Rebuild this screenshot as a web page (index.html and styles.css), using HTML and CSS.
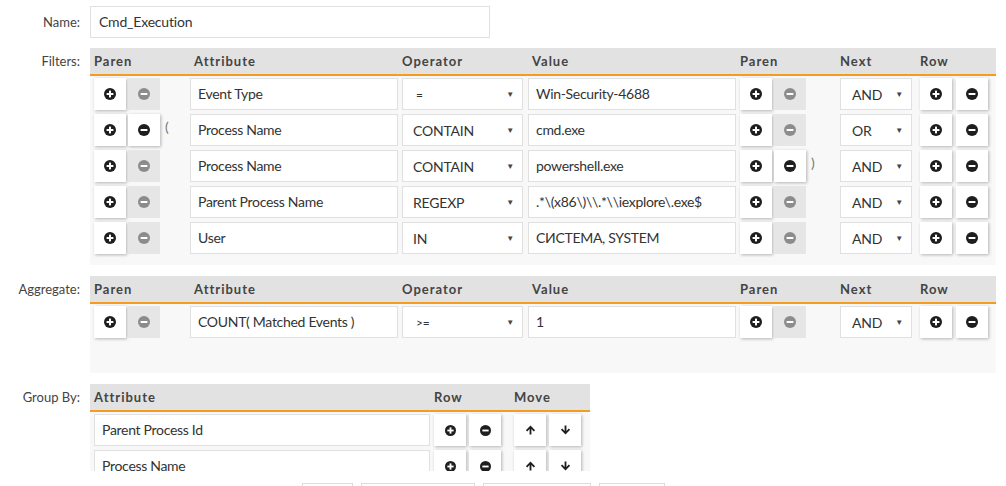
FILE: index.html
```html
<!DOCTYPE html>
<html>
<head>
<meta charset="utf-8">
<link rel="stylesheet" href="styles.css">
</head>
<body>
<svg width="0" height="0" style="position:absolute">
  <defs>
    <symbol id="plus" viewBox="0 0 12 12"><circle cx="6" cy="6" r="6"/><rect x="5" y="2.6" width="2" height="6.8" fill="#fff"/><rect x="2.6" y="5" width="6.8" height="2" fill="#fff"/></symbol>
    <symbol id="minus" viewBox="0 0 12 12"><circle cx="6" cy="6" r="6"/><rect x="2.6" y="5" width="6.8" height="2" fill="#fff"/></symbol>
    <symbol id="up" viewBox="0 0 12 12"><path d="M6 1 L11 6.2 L9.6 7.6 L7 5 L7 11 L5 11 L5 5 L2.4 7.6 L1 6.2 Z"/></symbol>
    <symbol id="down" viewBox="0 0 12 12"><path d="M6 11 L11 5.8 L9.6 4.4 L7 7 L7 1 L5 1 L5 7 L2.4 4.4 L1 5.8 Z"/></symbol>
  </defs>
</svg>
<div class="form">
  <div class="field">
    <div class="lbl lbl-name">Name:</div>
    <div class="name-input">Cmd_Execution</div>
  </div>

  <div class="field section">
    <div class="lbl">Filters:</div>
    <div class="table wide">
      <div class="thead">
        <div class="h c-paren">Paren</div>
        <div class="h c-attr">Attribute</div>
        <div class="h c-op">Operator</div>
        <div class="h c-val">Value</div>
        <div class="h c-paren2">Paren</div>
        <div class="h c-next">Next</div>
        <div class="h c-row">Row</div>
      </div>
      <div class="tbody filters-body">
        <div class="row">
          <div class="btn"><svg class="ic"><use href="#plus"/></svg></div>
          <div class="btn off"><svg class="ic"><use href="#minus"/></svg></div>
          <div class="par"></div>
          <div class="inp attr">Event Type</div>
          <div class="sel op"><span class="eq">=</span><span class="arr">▼</span></div>
          <div class="inp val">Win-Security-4688</div>
          <div class="btn"><svg class="ic"><use href="#plus"/></svg></div>
          <div class="btn off"><svg class="ic"><use href="#minus"/></svg></div>
          <div class="par2"></div>
          <div class="sel next"><span>AND</span><span class="arr">▼</span></div>
          <div class="btn rb1"><svg class="ic"><use href="#plus"/></svg></div>
          <div class="btn rb2"><svg class="ic"><use href="#minus"/></svg></div>
        </div>
        <div class="row">
          <div class="btn"><svg class="ic"><use href="#plus"/></svg></div>
          <div class="btn"><svg class="ic"><use href="#minus"/></svg></div>
          <div class="par">(</div>
          <div class="inp attr">Process Name</div>
          <div class="sel op"><span>CONTAIN</span><span class="arr">▼</span></div>
          <div class="inp val">cmd.exe</div>
          <div class="btn"><svg class="ic"><use href="#plus"/></svg></div>
          <div class="btn off"><svg class="ic"><use href="#minus"/></svg></div>
          <div class="par2"></div>
          <div class="sel next"><span>OR</span><span class="arr">▼</span></div>
          <div class="btn rb1"><svg class="ic"><use href="#plus"/></svg></div>
          <div class="btn rb2"><svg class="ic"><use href="#minus"/></svg></div>
        </div>
        <div class="row">
          <div class="btn"><svg class="ic"><use href="#plus"/></svg></div>
          <div class="btn off"><svg class="ic"><use href="#minus"/></svg></div>
          <div class="par"></div>
          <div class="inp attr">Process Name</div>
          <div class="sel op"><span>CONTAIN</span><span class="arr">▼</span></div>
          <div class="inp val">powershell.exe</div>
          <div class="btn"><svg class="ic"><use href="#plus"/></svg></div>
          <div class="btn"><svg class="ic"><use href="#minus"/></svg></div>
          <div class="par2">)</div>
          <div class="sel next"><span>AND</span><span class="arr">▼</span></div>
          <div class="btn rb1"><svg class="ic"><use href="#plus"/></svg></div>
          <div class="btn rb2"><svg class="ic"><use href="#minus"/></svg></div>
        </div>
        <div class="row">
          <div class="btn"><svg class="ic"><use href="#plus"/></svg></div>
          <div class="btn off"><svg class="ic"><use href="#minus"/></svg></div>
          <div class="par"></div>
          <div class="inp attr">Parent Process Name</div>
          <div class="sel op"><span>REGEXP</span><span class="arr">▼</span></div>
          <div class="inp val">.*\(x86\)\\.*\\iexplore\.exe$</div>
          <div class="btn"><svg class="ic"><use href="#plus"/></svg></div>
          <div class="btn off"><svg class="ic"><use href="#minus"/></svg></div>
          <div class="par2"></div>
          <div class="sel next"><span>AND</span><span class="arr">▼</span></div>
          <div class="btn rb1"><svg class="ic"><use href="#plus"/></svg></div>
          <div class="btn rb2"><svg class="ic"><use href="#minus"/></svg></div>
        </div>
        <div class="row">
          <div class="btn"><svg class="ic"><use href="#plus"/></svg></div>
          <div class="btn off"><svg class="ic"><use href="#minus"/></svg></div>
          <div class="par"></div>
          <div class="inp attr">User</div>
          <div class="sel op"><span>IN</span><span class="arr">▼</span></div>
          <div class="inp val">СИСТЕМА, SYSTEM</div>
          <div class="btn"><svg class="ic"><use href="#plus"/></svg></div>
          <div class="btn off"><svg class="ic"><use href="#minus"/></svg></div>
          <div class="par2"></div>
          <div class="sel next"><span>AND</span><span class="arr">▼</span></div>
          <div class="btn rb1"><svg class="ic"><use href="#plus"/></svg></div>
          <div class="btn rb2"><svg class="ic"><use href="#minus"/></svg></div>
        </div>
      </div>
    </div>
  </div>

  <div class="field section">
    <div class="lbl">Aggregate:</div>
    <div class="table wide">
      <div class="thead">
        <div class="h c-paren">Paren</div>
        <div class="h c-attr">Attribute</div>
        <div class="h c-op">Operator</div>
        <div class="h c-val">Value</div>
        <div class="h c-paren2">Paren</div>
        <div class="h c-next">Next</div>
        <div class="h c-row">Row</div>
      </div>
      <div class="tbody agg-body">
        <div class="row">
          <div class="btn"><svg class="ic"><use href="#plus"/></svg></div>
          <div class="btn off"><svg class="ic"><use href="#minus"/></svg></div>
          <div class="par"></div>
          <div class="inp attr">COUNT( Matched Events )</div>
          <div class="sel op"><span class="eq">&gt;=</span><span class="arr">▼</span></div>
          <div class="inp val">1</div>
          <div class="btn"><svg class="ic"><use href="#plus"/></svg></div>
          <div class="btn off"><svg class="ic"><use href="#minus"/></svg></div>
          <div class="par2"></div>
          <div class="sel next"><span>AND</span><span class="arr">▼</span></div>
          <div class="btn rb1"><svg class="ic"><use href="#plus"/></svg></div>
          <div class="btn rb2"><svg class="ic"><use href="#minus"/></svg></div>
        </div>
      </div>
    </div>
  </div>

  <div class="field section">
    <div class="lbl">Group By:</div>
    <div class="table narrow">
      <div class="thead">
        <div class="h g-attr">Attribute</div>
        <div class="h g-row">Row</div>
        <div class="h g-move">Move</div>
      </div>
      <div class="tbody group-body">
        <div class="row">
          <div class="inp gattr">Parent Process Id</div>
          <div class="btn sm"><svg class="ic s"><use href="#plus"/></svg></div>
          <div class="btn sm"><svg class="ic s"><use href="#minus"/></svg></div>
          <div class="btn sm mv"><svg class="ic a"><use href="#up"/></svg></div>
          <div class="btn sm"><svg class="ic a"><use href="#down"/></svg></div>
        </div>
        <div class="row">
          <div class="inp gattr">Process Name</div>
          <div class="btn sm"><svg class="ic s"><use href="#plus"/></svg></div>
          <div class="btn sm"><svg class="ic s"><use href="#minus"/></svg></div>
          <div class="btn sm mv"><svg class="ic a"><use href="#up"/></svg></div>
          <div class="btn sm"><svg class="ic a"><use href="#down"/></svg></div>
        </div>
      </div>
    </div>
  </div>
</div>
<div class="footer">
  <div class="fbtn f1"></div>
  <div class="fbtn f2"></div>
  <div class="fbtn f3"></div>
  <div class="fbtn f4"></div>
</div>
</body>
</html>
```

FILE: styles.css
```css
html, body {
  margin: 0;
  padding: 0;
  background: #fff;
}
body {
  font-family: Lato, "Open Sans", "Liberation Sans", sans-serif;
  font-size: 14px;
  color: #333;
  width: 1006px;
  height: 486px;
  overflow: hidden;
}
.form {
  height: 471px;
  overflow: hidden;
  padding-top: 6px;
  box-sizing: border-box;
}
.field {
  display: flex;
  align-items: flex-start;
}
.section {
  margin-top: 11px;
}
.field:nth-child(2) {
  margin-top: 10px;
}
.lbl {
  width: 90px;
  padding-right: 10px;
  box-sizing: border-box;
  text-align: right;
  font-size: 13px;
  line-height: 26px;
  color: #444;
  flex: none;
}
.lbl-name {
  line-height: 32px;
}
.name-input {
  width: 400px;
  height: 32px;
  box-sizing: border-box;
  border: 1px solid #e0e0e0;
  padding-left: 8px;
  line-height: 30px;
  font-size: 14px;
  letter-spacing: -0.2px;
  color: #333;
}
.table.wide { width: 906px; }
.table.narrow { width: 500px; }
.thead {
  display: flex;
  height: 26px;
  background: #e2e2e2;
  border-bottom: 2px solid #f39c1f;
  font-weight: bold;
  font-size: 13px;
  letter-spacing: 1px;
  line-height: 26px;
  color: #444;
}
.h { flex: none; box-sizing: border-box; }
.c-paren { width: 100px; padding-left: 4px; }
.c-attr { width: 212px; padding-left: 4px; }
.c-op { width: 126px; padding-left: 0; }
.c-val { width: 212px; padding-left: 4px; }
.c-paren2 { width: 100px; }
.c-next { width: 80px; }
.c-row { width: 76px; }
.g-attr { width: 344px; padding-left: 4px; }
.g-row { width: 80px; }
.g-move { width: 76px; }

.tbody {
  background: #f8f8f8;
  display: flex;
  flex-direction: column;
  gap: 4px;
  padding: 2px 4px 11px;
}
.agg-body { height: 69px; box-sizing: border-box; }
.group-body { height: 80px; }

.row {
  display: flex;
  height: 32px;
  align-items: stretch;
}
.btn {
  width: 32px;
  height: 32px;
  flex: none;
  background: #fff;
  box-shadow: 1px 1px 3px rgba(0, 0, 0, 0.28);
  display: flex;
  align-items: center;
  justify-content: center;
  margin-right: 2px;
  fill: #1e1e1e;
}
.btn.off {
  background: #e6e6e6;
  box-shadow: none;
  fill: #8c8c8c;
}
.ic { width: 12px; height: 12px; }
.ic.s { width: 11px; height: 11px; }
.ic.a { width: 11px; height: 12px; }
.par, .par2 {
  flex: none;
  color: #777;
  font-size: 14px;
  line-height: 26px;
  padding-left: 3px;
  box-sizing: border-box;
}
.par { width: 28px; }
.par2 { width: 32px; }
.inp {
  flex: none;
  background: #fff;
  border: 1px solid #e0e0e0;
  box-sizing: border-box;
  padding-left: 7px;
  line-height: 30px;
  font-size: 14px;
  letter-spacing: -0.3px;
  color: #333;
  white-space: nowrap;
  overflow: hidden;
}
.attr { width: 208px; margin-right: 4px; }
.val { width: 208px; margin-right: 4px; }
.gattr { width: 336px; margin-right: 4px; }
.sel {
  flex: none;
  background: #fff;
  border: 1px solid #e0e0e0;
  box-sizing: border-box;
  display: flex;
  justify-content: space-between;
  align-items: center;
  padding: 0 8px 0 10px;
  font-size: 14px;
  letter-spacing: -0.2px;
  color: #333;
}
.sel .eq {
  padding-left: 3px;
  font-size: 12px;
}
.sel .arr {
  font-size: 8px;
  color: #444;
}
.op { width: 121px; margin-right: 5px; }
.next { width: 72px; margin-right: 8px; padding-left: 11px; }
.rb1 { margin-right: 4px; }
.btn.sm { margin-right: 3px; }
.btn.mv { margin-left: 10px; }

.footer {
  display: flex;
  padding-top: 12px;
  padding-left: 302px;
  gap: 8px;
}
.fbtn {
  height: 30px;
  box-sizing: border-box;
  border: 1px solid #dcdcdc;
  background: #fff;
}
.f1 { width: 51px; }
.f2 { width: 114px; }
.f3 { width: 108px; }
.f4 { width: 66px; }
```
